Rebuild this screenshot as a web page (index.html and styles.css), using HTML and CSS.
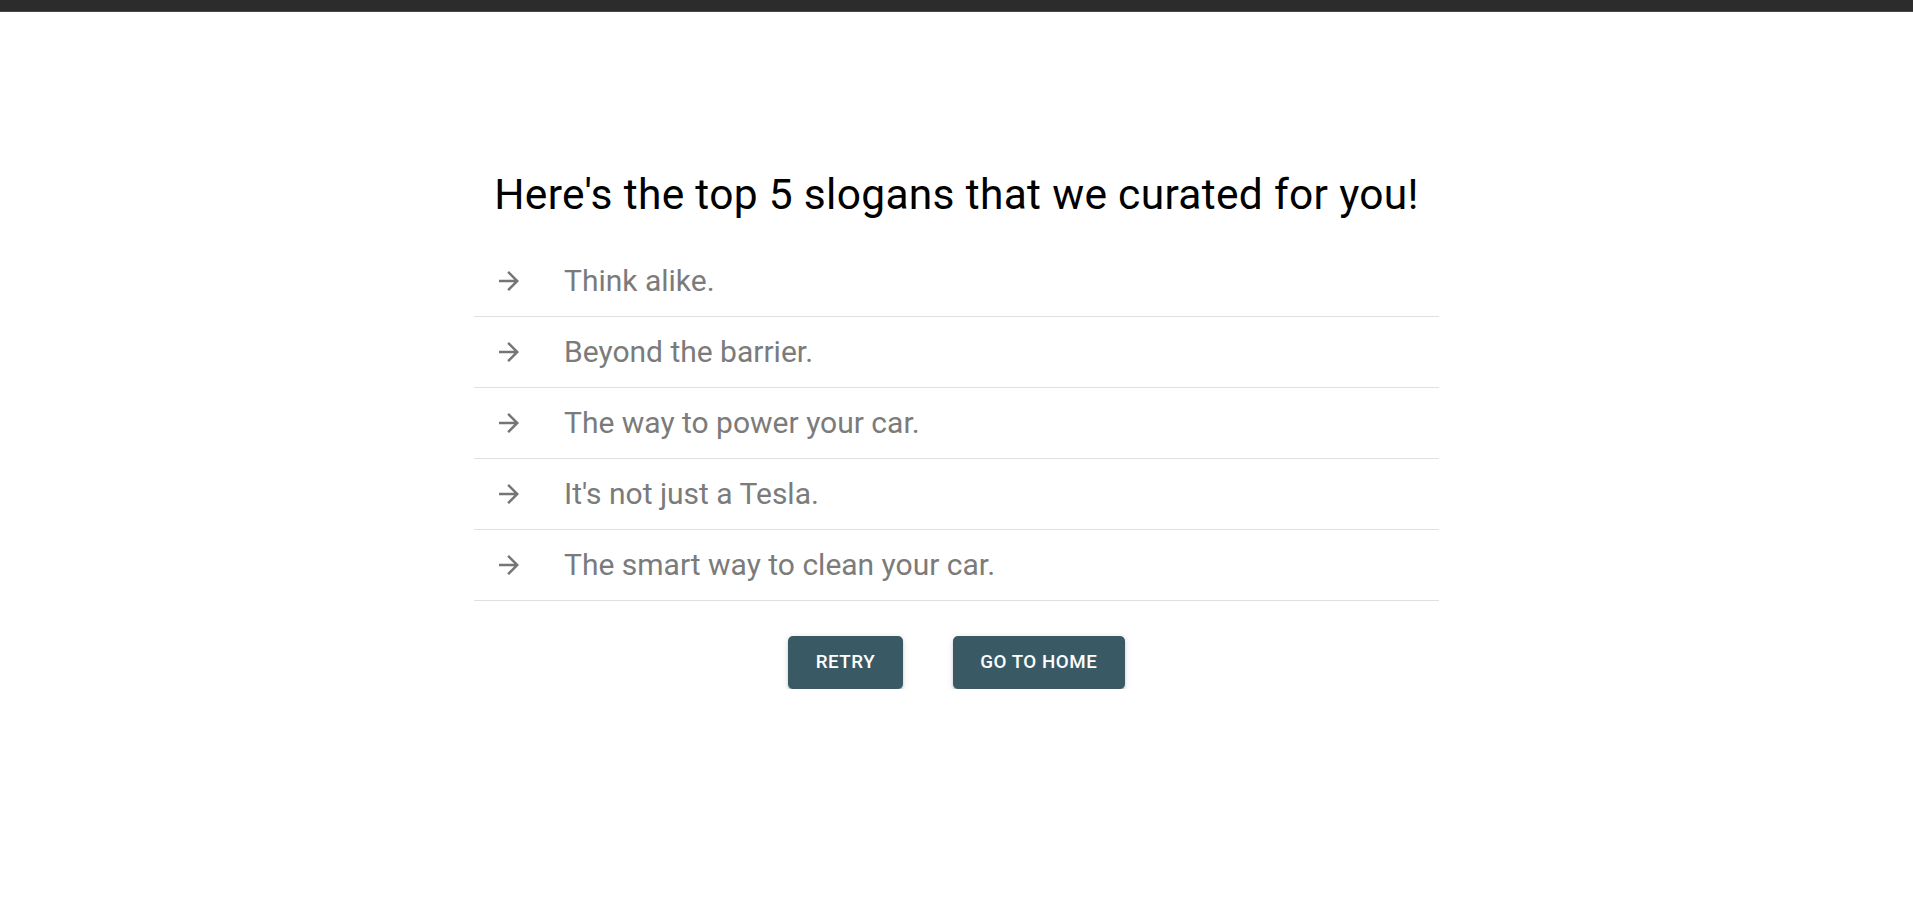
FILE: index.html
```html
<!DOCTYPE html>
<html lang="en">
<head>
<meta charset="utf-8">
<title>Slogans</title>
<link rel="stylesheet" href="styles.css">
</head>
<body>
<div class="topbar"></div>
<main class="page">
  <section class="card">
    <h1 class="title">Here's the top 5 slogans that we curated for you!</h1>
    <ul class="list">
      <li class="row">
        <span class="icon"><svg viewBox="0 0 24 24" width="30" height="30"><path d="M12 4l-1.41 1.41L16.17 11H4v2h12.17l-5.58 5.59L12 20l8-8z"/></svg></span>
        <span class="text">Think alike.</span>
      </li>
      <li class="row">
        <span class="icon"><svg viewBox="0 0 24 24" width="30" height="30"><path d="M12 4l-1.41 1.41L16.17 11H4v2h12.17l-5.58 5.59L12 20l8-8z"/></svg></span>
        <span class="text">Beyond the barrier.</span>
      </li>
      <li class="row">
        <span class="icon"><svg viewBox="0 0 24 24" width="30" height="30"><path d="M12 4l-1.41 1.41L16.17 11H4v2h12.17l-5.58 5.59L12 20l8-8z"/></svg></span>
        <span class="text">The way to power your car.</span>
      </li>
      <li class="row">
        <span class="icon"><svg viewBox="0 0 24 24" width="30" height="30"><path d="M12 4l-1.41 1.41L16.17 11H4v2h12.17l-5.58 5.59L12 20l8-8z"/></svg></span>
        <span class="text">It's not just a Tesla.</span>
      </li>
      <li class="row">
        <span class="icon"><svg viewBox="0 0 24 24" width="30" height="30"><path d="M12 4l-1.41 1.41L16.17 11H4v2h12.17l-5.58 5.59L12 20l8-8z"/></svg></span>
        <span class="text">The smart way to clean your car.</span>
      </li>
    </ul>
    <div class="actions">
      <button class="btn" type="button">Retry</button>
      <button class="btn" type="button">Go to home</button>
    </div>
  </section>
</main>
</body>
</html>
```
FILE: styles.css
```css
html, body {
  margin: 0;
  padding: 0;
  background: #ffffff;
  font-family: Roboto, "Liberation Sans", Arial, sans-serif;
}

.topbar {
  height: 11px;
  background: #2c2c2c;
  border-bottom: 1px solid #474747;
}

.page {
  display: flex;
  justify-content: center;
  padding-top: 157px;
}

.card {
  width: 965px;
}

.title {
  margin: 0;
  text-align: center;
  font-size: 42.5px;
  line-height: 52.5px;
  font-weight: 400;
  letter-spacing: 0.00735em;
  color: #000000;
}

.list {
  list-style: none;
  margin: 14.5px 0 0;
  padding: 10px 0;
}

.row {
  display: flex;
  align-items: center;
  padding: 10px 20px;
  border-bottom: 1px solid #e0e0e0;
}

.icon {
  min-width: 70px;
  display: flex;
  align-items: center;
}

.icon svg {
  display: block;
  fill: #757575;
}

.text {
  margin: 5px 0;
  font-size: 30px;
  line-height: 40px;
  color: #7b7b7b;
}

.actions {
  display: flex;
  justify-content: center;
  gap: 50px;
  margin-top: 25px;
}

.btn {
  font-family: Roboto, "Liberation Sans", Arial, sans-serif;
  font-weight: 500;
  font-size: 18.75px;
  line-height: 1.75;
  letter-spacing: 0.02857em;
  text-transform: uppercase;
  color: #ffffff;
  background: #395a64;
  border: 0;
  border-radius: 5px;
  padding: 10px 27.5px;
  box-shadow: 0 3.75px 1.25px -2.5px rgba(0,0,0,0.2), 0 2.5px 2.5px 0 rgba(0,0,0,0.14), 0 1.25px 6.25px 0 rgba(0,0,0,0.12);
  cursor: pointer;
}
```
